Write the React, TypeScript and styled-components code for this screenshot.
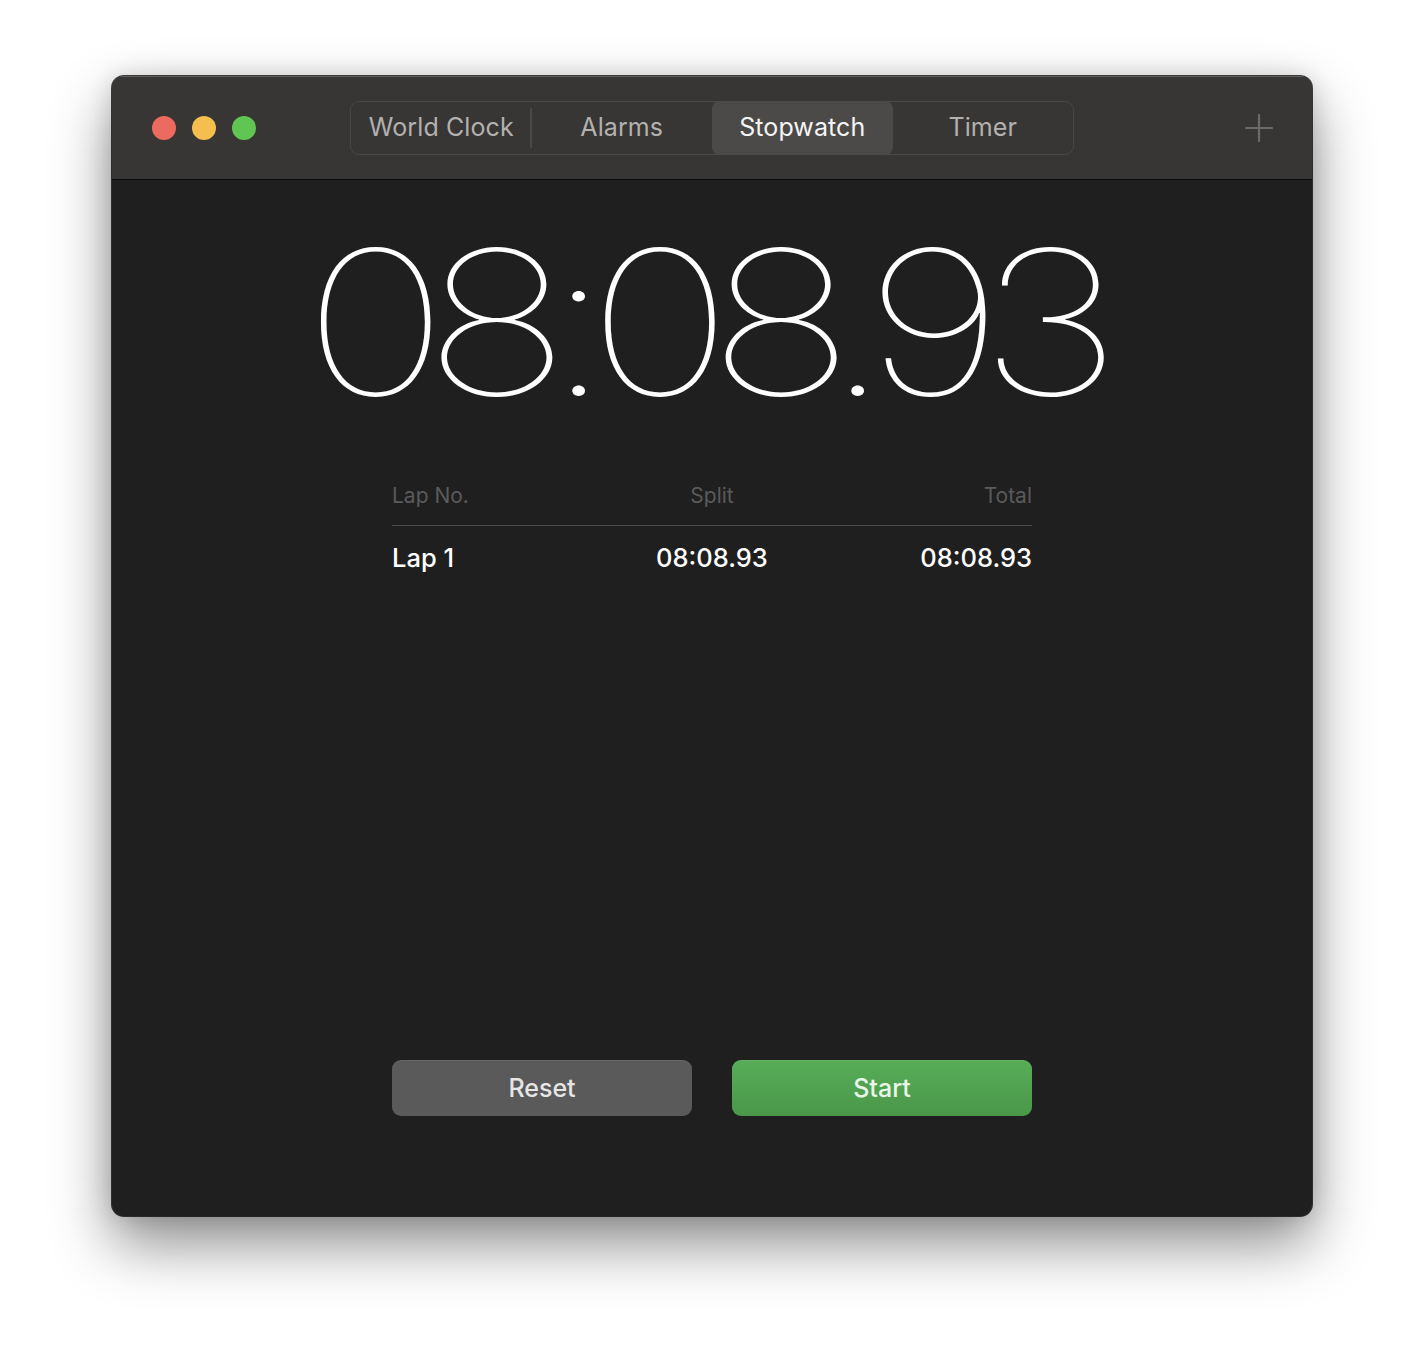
import styled, { createGlobalStyle } from "styled-components"

// Styles
const GlobalStyle = createGlobalStyle`
  html, body {
    margin: 0;
    background: #ffffff;
  }
  body {
    font-family: Inter, "Noto Sans", "Liberation Sans", sans-serif;
  }
`
const Page = styled.div`
  padding: 76px 112px 148px;
  display: flex;
`
const Window = styled.div`
  width: 1200px;
  height: 1140px;
  border-radius: 12px;
  overflow: hidden;
  display: flex;
  flex-direction: column;
  background: #1f1f1f;
  box-shadow:
    0 0 0 1px rgba(0, 0, 0, 0.75),
    inset 0 1px 0 rgba(255, 255, 255, 0.22),
    0 28px 60px rgba(0, 0, 0, 0.45),
    0 0 24px rgba(0, 0, 0, 0.15);
`
const TitleBar = styled.div`
  height: 103px;
  flex-shrink: 0;
  background: #383634;
  border-bottom: 1px solid #0c0c0c;
  box-shadow: inset 0 1px 0 rgba(255, 255, 255, 0.2);
  display: flex;
  align-items: center;
  padding: 0 40px;
`
const Lights = styled.div`
  display: flex;
  gap: 16px;
  width: 198px;
`
const Light = styled.span<{ $color: string }>`
  width: 24px;
  height: 24px;
  border-radius: 50%;
  background: ${p => p.$color};
`
const Segmented = styled.div`
  display: flex;
  width: 724px;
  height: 54px;
  box-sizing: border-box;
  border: 1px solid #4a4846;
  border-radius: 9px;
`
const Segment = styled.div<{ $active?: boolean; $divider?: boolean }>`
  flex: 1;
  display: flex;
  align-items: center;
  justify-content: center;
  padding-bottom: 2px;
  font-size: 25px;
  letter-spacing: 0.1px;
  color: ${p => p.$active ? "#f4f4f4" : "#b3b1af"};
  background: ${p => p.$active ? "#4c4a48" : "transparent"};
  border-radius: 8px;
  margin: -1px 0;
  position: relative;
  &::after {
    content: "";
    display: ${p => p.$divider ? "block" : "none"};
    position: absolute;
    right: 0;
    top: 7px;
    bottom: 7px;
    width: 2px;
    background: #4a4846;
  }
`
const AddButton = styled.div`
  margin-left: auto;
  margin-right: -1px;
  display: flex;
  color: #6d6b69;
`
const Content = styled.div`
  flex: 1;
  display: flex;
  flex-direction: column;
  align-items: center;
`
const Time = styled.div`
  margin-top: 22px;
  padding-right: 20px;
  font-size: 201px;
  font-weight: 100;
  line-height: 240px;
  color: #ffffff;
  letter-spacing: -20px;
  transform: scaleX(1.22);
`
const Laps = styled.div`
  margin-top: 26px;
  width: 640px;
`
const LapRow = styled.div<{ $head?: boolean }>`
  display: grid;
  grid-template-columns: 1fr 1fr 1fr;
  align-items: center;
  height: ${p => p.$head ? "58px" : "62px"};
  font-size: ${p => p.$head ? "21px" : "25.5px"};
  font-weight: ${p => p.$head ? 400 : 500};
  color: ${p => p.$head ? "#5a5a5b" : "#ffffff"};
  border-bottom: ${p => p.$head ? "1px solid #4a4a4a" : "none"};
  padding-bottom: ${p => p.$head ? "2px" : "0"};
  box-sizing: border-box;
  & > :nth-child(2) { text-align: center; }
  & > :nth-child(3) { text-align: right; }
`
const Spacer = styled.div`
  flex: 1;
`
const Buttons = styled.div`
  display: flex;
  gap: 40px;
  margin-bottom: 100px;
`
const Btn = styled.button<{ $green?: boolean }>`
  width: 300px;
  height: 56px;
  border: none;
  border-radius: 9px;
  padding-bottom: 2px;
  font-family: inherit;
  font-size: 25px;
  font-weight: 500;
  color: ${p => p.$green ? "#eaf5ea" : "#e6e6e6"};
  background: ${p => p.$green
    ? "linear-gradient(#57ad57, #4a974a)"
    : "#5a5a5a"};
  box-shadow: inset 0 1px 0 rgba(255, 255, 255, 0.08);
`

const App: React.FC = () => {
  const tabs = ["World Clock", "Alarms", "Stopwatch", "Timer"]

  return (
    <Page>
      <GlobalStyle />
      <Window>
        <TitleBar>
          <Lights>
            <Light $color="#ec6a5e" />
            <Light $color="#f4bf4f" />
            <Light $color="#61c554" />
          </Lights>
          <Segmented>
            {tabs.map((t, i) => (
              <Segment key={t} $active={t === "Stopwatch"} $divider={i === 0}>{t}</Segment>
            ))}
          </Segmented>
          <AddButton>
            <svg width="28" height="28" viewBox="0 0 28 28">
              <path d="M14 1v26M1 14h26" stroke="currentColor" strokeWidth="2.2" strokeLinecap="round" />
            </svg>
          </AddButton>
        </TitleBar>
        <Content>
          <Time>08:08.93</Time>
          <Laps>
            <LapRow $head>
              <span>Lap No.</span>
              <span>Split</span>
              <span>Total</span>
            </LapRow>
            <LapRow>
              <span>Lap 1</span>
              <span>08:08.93</span>
              <span>08:08.93</span>
            </LapRow>
          </Laps>
          <Spacer />
          <Buttons>
            <Btn>Reset</Btn>
            <Btn $green>Start</Btn>
          </Buttons>
        </Content>
      </Window>
    </Page>
  )
}

export default App
